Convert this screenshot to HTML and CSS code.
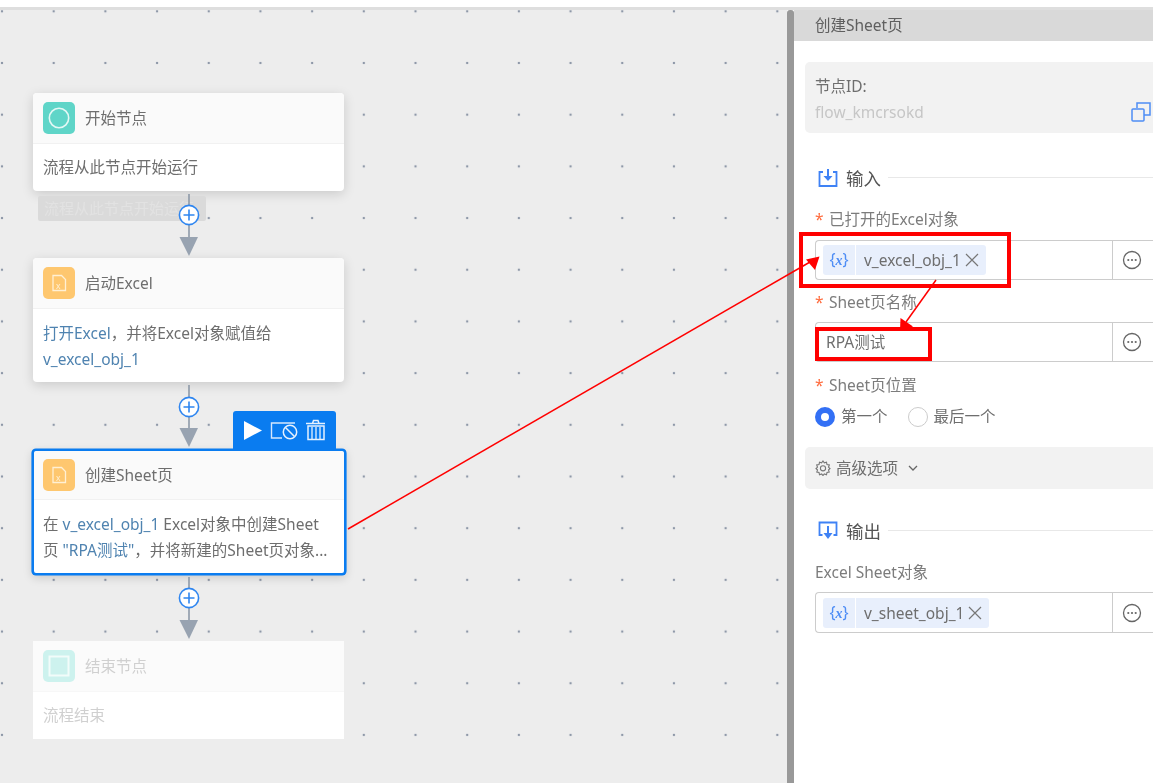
FILE: index.html
```html
<!DOCTYPE html>
<html lang="zh-CN">
<head>
<meta charset="utf-8">
<title>创建Sheet页</title>
<link rel="stylesheet" href="styles.css">
</head>
<body>
<div class="app">
  <div class="topbar"></div>
  <main class="main">
    <section class="canvas">
      <div class="flow">
        <article class="node">
          <header class="node-head">
            <span class="node-icon teal"><svg width="32" height="32" viewBox="0 0 32 32"><circle cx="16" cy="16" r="9.7" fill="none" stroke="#e4f8f5" stroke-width="1.6"/></svg></span>
            <span>开始节点</span>
          </header>
          <div class="node-body">流程从此节点开始运行</div>
          <div class="tip">流程从此节点开始运行</div>
        </article>
        <div class="link">
          <svg width="24" height="67" viewBox="0 0 24 67"><path d="M12 3V50" stroke="#8d99a8" stroke-width="1.6"/><path d="M2.5 46H21L12 65Z" fill="#98a3b1"/><circle cx="12" cy="24" r="9.6" fill="#fff" stroke="#2f86f0" stroke-width="1.6"/><path d="M6.5 24H17.5M12 18.5V29.5" stroke="#2f86f0" stroke-width="1.6"/></svg>
        </div>
        <article class="node">
          <header class="node-head">
            <span class="node-icon amber"><svg width="32" height="32" viewBox="0 0 32 32"><path d="M10 8.5H18.500L22.500 12.500V23.500H10Z" fill="none" stroke="#fff0d4" stroke-width="1.300"/><text x="13" y="21.500" class="xmark">x</text></svg></span>
            <span>启动Excel</span>
          </header>
          <div class="node-body body-low"><span class="var">打开Excel</span>，并将Excel对象赋值给<br><span class="var">v_excel_obj_1</span></div>
        </article>
        <div class="link">
          <svg width="24" height="67" viewBox="0 0 24 67"><path d="M12 3V50" stroke="#8d99a8" stroke-width="1.6"/><path d="M2.5 46H21L12 65Z" fill="#98a3b1"/><circle cx="12" cy="25" r="9.6" fill="#fff" stroke="#2f86f0" stroke-width="1.6"/><path d="M6.5 25H17.5M12 19.5V30.5" stroke="#2f86f0" stroke-width="1.6"/></svg>
        </div>
        <article class="node active">
          <div class="node-tools">
            <svg width="103" height="38" viewBox="0 0 103 38"><path d="M11 10L29 19.500L11 29Z" fill="#fff"/><path d="M49 27H38.500V12H62" fill="none" stroke="#d5e7fd" stroke-width="1.400"/><circle cx="57" cy="21" r="6.700" fill="#0a7cf0" stroke="#e6f1fe" stroke-width="1.500"/><path d="M52.500 16.500L61.500 25.500" stroke="#e6f1fe" stroke-width="1.500"/><path d="M73 12.500H92M79.500 12.500L80.500 9.500H85L86 12.500" fill="none" stroke="#e6f1fe" stroke-width="1.500"/><path d="M75 15H91V28.500H75Z" fill="none" stroke="#e6f1fe" stroke-width="1.500"/><path d="M79 16V28M83 16V28M87 16V28" stroke="#e6f1fe" stroke-width="1.300"/></svg>
          </div>
          <header class="node-head">
            <span class="node-icon amber"><svg width="32" height="32" viewBox="0 0 32 32"><path d="M10 8.500H18.500L22.500 12.500V23.500H10Z" fill="none" stroke="#fff0d4" stroke-width="1.300"/><text x="13" y="21.500" class="xmark">x</text></svg></span>
            <span>创建Sheet页</span>
          </header>
          <div class="node-body">在 <span class="var">v_excel_obj_1</span> Excel对象中创建Sheet<br>页 <span class="var">"RPA测试"</span>，并将新建的Sheet页对象...</div>
        </article>
        <div class="link">
          <svg width="24" height="67" viewBox="0 0 24 67"><path d="M12 2V50" stroke="#8d99a8" stroke-width="1.6"/><path d="M2.5 45H21L12 64Z" fill="#98a3b1"/><circle cx="12" cy="23" r="9.6" fill="#fff" stroke="#2f86f0" stroke-width="1.6"/><path d="M6.5 23H17.5M12 17.5V28.5" stroke="#2f86f0" stroke-width="1.6"/></svg>
        </div>
        <article class="node ghost">
          <header class="node-head">
            <span class="node-icon teal"><svg width="32" height="32" viewBox="0 0 32 32"><rect x="6.500" y="6.500" width="19" height="19" fill="none" stroke="#f2fcfa" stroke-width="2"/></svg></span>
            <span>结束节点</span>
          </header>
          <div class="node-body">流程结束</div>
        </article>
      </div>
    </section>
    <div class="splitter"></div>
    <aside class="panel">
      <h1 class="panel-title">创建Sheet页</h1>
      <div class="panel-body">
        <div class="id-card">
          <div class="id-label">节点ID:</div>
          <div class="id-row">
            <span class="id-value">flow_kmcrsokd</span>
            <svg width="20" height="20" viewBox="0 0 20 20"><path d="M6 6V1H19V13H13" fill="none" stroke="#4e8df5" stroke-width="1.500"/><rect x="1" y="7" width="12" height="12" rx="1" fill="none" stroke="#4e8df5" stroke-width="1.500"/></svg>
          </div>
        </div>

        <div class="section first">
          <svg width="20" height="20" viewBox="0 0 20 20"><path d="M5 4H1.500V18H18.500V4H15" fill="none" stroke="#3f82f5" stroke-width="1.800"/><path d="M10 1V9" stroke="#3f82f5" stroke-width="2"/><path d="M5.500 8H14.500L10 13Z" fill="#3f82f5"/></svg>
          <span class="section-name">输入</span>
          <span class="section-rule"></span>
        </div>

        <label class="label"><b>*</b>已打开的Excel对象</label>
        <div class="field">
          <div class="field-main">
            <span class="tag"><i class="tag-x">{<em>x</em>}</i><span class="tag-name">v_excel_obj_1</span><svg width="14" height="14" viewBox="0 0 14 14"><path d="M1 1L13 13M13 1L1 13" stroke="#777" stroke-width="1.200"/></svg></span>
          </div>
          <span class="field-more"><svg width="20" height="20" viewBox="0 0 20 20"><circle cx="10" cy="10" r="8.500" fill="none" stroke="#666" stroke-width="1.300"/><circle cx="6.300" cy="10" r="1.100" fill="#666"/><circle cx="10" cy="10" r="1.100" fill="#666"/><circle cx="13.700" cy="10" r="1.100" fill="#666"/></svg></span>
        </div>

        <label class="label gap"><b>*</b>Sheet页名称</label>
        <div class="field">
          <div class="field-main"><span class="plain">RPA测试</span></div>
          <span class="field-more"><svg width="20" height="20" viewBox="0 0 20 20"><circle cx="10" cy="10" r="8.500" fill="none" stroke="#666" stroke-width="1.300"/><circle cx="6.300" cy="10" r="1.100" fill="#666"/><circle cx="10" cy="10" r="1.100" fill="#666"/><circle cx="13.700" cy="10" r="1.100" fill="#666"/></svg></span>
        </div>

        <label class="label gap-wide"><b>*</b>Sheet页位置</label>
        <div class="radios">
          <span class="radio on"></span><span class="radio-text">第一个</span>
          <span class="radio"></span><span class="radio-text">最后一个</span>
        </div>

        <div class="advanced">
          <svg width="16" height="16" viewBox="0 0 16 16"><path d="M8 1L9.300 2.900L11.500 2.300L12 4.500L14.300 5L13.500 7.200L15 8.500L13.500 10L14.200 12L12 12.500L11.500 14.700L9.300 14L8 15.500L6.600 14L4.500 14.700L4 12.500L1.800 12L2.500 10L1 8.500L2.500 7.200L1.700 5L4 4.500L4.500 2.300L6.600 2.900Z" fill="none" stroke="#777" stroke-width="1.100"/><circle cx="8" cy="8.300" r="2.600" fill="none" stroke="#777" stroke-width="1.100"/></svg>
          <span>高级选项</span>
          <svg width="10" height="6" viewBox="0 0 10 6" class="chev"><path d="M1 1L5 5L9 1" fill="none" stroke="#666" stroke-width="1.300"/></svg>
        </div>

        <div class="section second">
          <svg width="20" height="20" viewBox="0 0 20 20"><path d="M4.500 14H1.500V1.500H18.500V14H15.500" fill="none" stroke="#3f82f5" stroke-width="1.800"/><path d="M10 5V13" stroke="#3f82f5" stroke-width="2"/><path d="M5.500 12H14.500L10 18Z" fill="#3f82f5"/></svg>
          <span class="section-name">输出</span>
          <span class="section-rule"></span>
        </div>

        <label class="label out">Excel Sheet对象</label>
        <div class="field tall">
          <div class="field-main">
            <span class="tag"><i class="tag-x">{<em>x</em>}</i><span class="tag-name">v_sheet_obj_1</span><svg width="14" height="14" viewBox="0 0 14 14"><path d="M1 1L13 13M13 1L1 13" stroke="#777" stroke-width="1.200"/></svg></span>
          </div>
          <span class="field-more"><svg width="20" height="20" viewBox="0 0 20 20"><circle cx="10" cy="10" r="8.500" fill="none" stroke="#666" stroke-width="1.300"/><circle cx="6.300" cy="10" r="1.100" fill="#666"/><circle cx="10" cy="10" r="1.100" fill="#666"/><circle cx="13.700" cy="10" r="1.100" fill="#666"/></svg></span>
        </div>
      </div>
    </aside>
  </main>
  <svg class="marks" width="1153" height="783" viewBox="0 0 1153 783">
    <rect x="801" y="234" width="208" height="52" fill="none" stroke="#f00" stroke-width="4"/>
    <rect x="817" y="329" width="113" height="30" fill="none" stroke="#f00" stroke-width="4"/>
    <path d="M348 529L810 262" stroke="#f00" stroke-width="1.500"/>
    <path d="M819.500 256.500L806 259.500L815 270Z" fill="#f00"/>
    <path d="M936 280L906 322" stroke="#f00" stroke-width="1.500"/>
    <path d="M900 331L900.500 318L913 326.500Z" fill="#f00"/>
  </svg>
</div>
</body>
</html>
```

FILE: styles.css
```css
* { box-sizing: border-box; }
html, body { margin: 0; padding: 0; background: #fff; }
body { font-family: "Noto Sans", "Noto Sans CJK SC", sans-serif; font-size: 15.5px; color: #6e6e6e; }

.app { position: relative; width: 1153px; height: 783px; overflow: hidden; display: flex; flex-direction: column; filter: blur(0.6px); }
.topbar { height: 10px; flex: none; background: #fff; border-bottom: 3px solid #dedede; }
.main { flex: 1; display: flex; min-height: 0; }

/* canvas */
.canvas {
  width: 787px; flex: none; background-color: #ededed;
  background-image: radial-gradient(circle, #8e98a8 1.2px, transparent 1.6px);
  background-size: 51.7px 51.7px;
  background-position: -23.850px -24.550px;
}
.flow { width: 311px; margin: 83px 0 0 33px; display: flex; flex-direction: column; }
.node { position: relative; background: #fff; border-radius: 4px; box-shadow: 0 3px 12px rgba(0,0,0,.15); }
.node-head { height: 51px; padding: 0 10px; display: flex; align-items: center; gap: 10px; background: #fafafa; border-bottom: 1px solid #f1f1f1; border-radius: 4px 4px 0 0; line-height: 20px; }
.node-icon { width: 32px; height: 32px; border-radius: 5px; flex: none; display: block; }
.node-icon svg { display: block; }
.teal { background: #5fd5c8; }
.amber { background: #fec76f; }
.xmark { font-size: 9px; fill: #fff0d4; font-family: "Liberation Sans", sans-serif; }
.node-body { padding: 10px 10px 11px; line-height: 26px; white-space: nowrap; }
.body-low { padding: 11px 10px 10px; }
.var { color: #4f83b0; }
.tip { position: absolute; z-index: -1; left: 5px; top: 103px; width: 168px; height: 25px; border-radius: 2px; background: #dadada; color: #e2e2e2; font-size: 15px; line-height: 25px; padding-left: 6px; white-space: nowrap; overflow: hidden; }
.node:first-child { z-index: 1; }
.link { height: 67px; display: flex; justify-content: center; position: relative; z-index: 2; }
.link svg { display: block; }
.active { margin: 0 -2px 0 -1px; height: 126px; border: 2px solid #0a7cf0; border-radius: 4px; box-shadow: 0 0 0 .6px #0a7cf0, 0 3px 10px rgba(0,0,0,.15); }
.active .node-head { height: 49px; padding: 0 9px; }
.active .node-body { padding: 11px 9px 0; }
.node-tools { position: absolute; right: 8px; top: -40px; width: 103px; height: 38px; background: #0a7cf0; border-radius: 3px 3px 0 0; }
.node-tools svg { display: block; }
.ghost { margin-top: -1px; box-shadow: none; border-radius: 0; color: #d0d0d0; }
.ghost .node-head { border-radius: 0; background: #fbfbfb; border-bottom-color: #f7f7f7; }
.ghost .teal { background: #cdf2ee; }

/* splitter */
.splitter { width: 7px; flex: none; background: #999; border-radius: 3px 3px 0 0; }

/* panel */
.panel { flex: 1; min-width: 0; background: #fff; }
.panel-title { margin: 0; height: 31px; padding-left: 21px; background: #d9d9d9; font-size: 15.5px; font-weight: 400; line-height: 31px; color: #5f5f5f; }
.panel-body { padding: 21px 0 0 11px; }
.id-card { height: 71px; background: #f2f2f2; border-radius: 5px 0 0 5px; padding: 14px 2px 0 10px; }
.id-label { line-height: 20px; }
.id-row { display: flex; justify-content: space-between; align-items: center; margin-top: 6px; height: 20px; color: #c6c6c6; }
.id-value { line-height: 20px; }
.section { display: flex; align-items: center; height: 20px; padding-left: 13px; }
.section.first { margin-top: 35px; }
.section.second { margin-top: 32px; }
.section-name { margin-left: 8px; font-size: 17.500px; line-height: 20px; color: #555; }
.section-rule { flex: 1; height: 1px; margin-left: 7px; margin-top: -2px; background: #e8e8e8; }
.label { display: block; margin: 21px 0 11px 10px; height: 20px; line-height: 20px; color: #7c7c7c; white-space: nowrap; }
.label b { display: inline-block; width: 14px; color: #ff6a3c; font-weight: 400; }
.label.gap { margin-top: 12px; margin-bottom: 10px; }
.label.gap-wide { margin-top: 13px; margin-bottom: 12px; }
.label.out { margin-bottom: 10px; }
.field { margin-left: 10px; height: 40px; display: flex; border: 1px solid #ccc; border-right: 0; border-radius: 4px 0 0 4px; background: #fff; }
.field.tall { height: 41px; }
.field-main { flex: 1; display: flex; align-items: center; padding-left: 7px; min-width: 0; }
.field-more { width: 41px; flex: none; border-left: 1px solid #ccc; display: flex; align-items: center; justify-content: center; }
.field-more svg { display: block; margin-right: 2px; }
.plain { margin-left: 3px; line-height: 20px; }
.tag { display: inline-flex; align-items: center; height: 30px; background: #e8effc; border-radius: 3px; padding-right: 7px; }
.tag-x { width: 33px; height: 30px; line-height: 28px; text-align: center; border-right: 1px solid #fff; color: #4e8df5; font-size: 16px; font-style: normal; font-weight: 400; font-family: "Noto Sans", sans-serif; }
.tag-x em { font-style: italic; font-weight: 700; font-size: 14px; font-family: "Liberation Serif", serif; }
.tag-name { margin: 0 4px 0 8px; line-height: 20px; white-space: nowrap; }
.tag svg { display: block; }
.radios { display: flex; align-items: center; height: 20px; margin-left: 10px; }
.radio { width: 20px; height: 20px; border-radius: 50%; border: 1px solid #ccc; flex: none; }
.radio.on { border: 6px solid #3370f5; background: #fff; }
.radio-text { margin: -2px 20px 0 6px; line-height: 20px; }
.advanced { margin-top: 20px; height: 42px; display: flex; align-items: center; padding-left: 10px; background: #f2f2f2; border-radius: 5px 0 0 5px; }
.advanced span { margin-left: 5px; line-height: 20px; }
.chev { margin-left: 10px; }

/* hand-drawn annotations laid over the shot */
.marks { position: absolute; left: 0; top: 0; pointer-events: none; z-index: 5; }
```
